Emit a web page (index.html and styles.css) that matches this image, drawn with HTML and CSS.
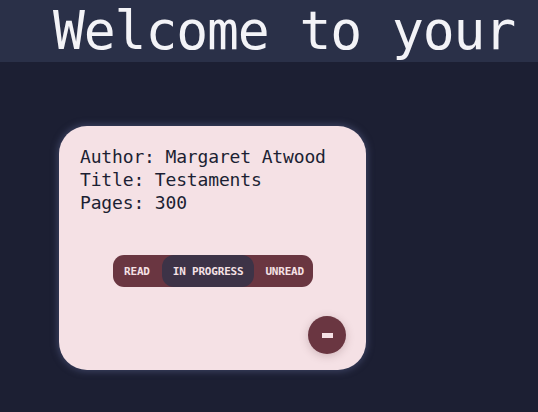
FILE: index.html
```html
<!DOCTYPE html>
<html lang="en">
<head>
<meta charset="utf-8">
<title>Library</title>
<link rel="stylesheet" href="styles.css">
</head>
<body>
<header class="top-bar">
  <h1 class="title">Welcome to your</h1>
</header>
<main class="shelf">
  <article class="book-card">
    <div class="book-info">
      <p>Author: Margaret Atwood</p>
      <p>Title: Testaments</p>
      <p>Pages: 300</p>
    </div>
    <div class="status-toggle">
      <span class="status status-read">READ</span>
      <span class="status active">IN PROGRESS</span>
      <span class="status status-unread">UNREAD</span>
    </div>
    <button class="remove-btn" aria-label="Remove book"><span class="minus"></span></button>
  </article>
</main>
</body>
</html>
```

FILE: styles.css
```css
html, body {
  margin: 0;
  padding: 0;
}
body {
  background: #1c1f33;
  font-family: "DejaVu Sans Mono", "Liberation Mono", monospace;
  width: 538px;
  height: 412px;
  overflow: hidden;
}
.top-bar {
  box-sizing: border-box;
  height: 62px;
  background: #2a3048;
  padding-left: 53px;
  white-space: nowrap;
}
.title {
  margin: 0;
  font-weight: normal;
  font-size: 53px;
  letter-spacing: -1.1px;
  line-height: normal;
  color: #f3f3f7;
}
.shelf {
  padding: 64px 0 0 59px;
}
.book-card {
  box-sizing: border-box;
  width: 307px;
  height: 244px;
  background: #f5e1e5;
  border-radius: 28px;
  box-shadow: 0 0 6px 2px rgba(80, 88, 125, 0.55);
  padding: 19px 20px 16px 21px;
  display: flex;
  flex-direction: column;
}
.book-info p {
  margin: 0;
  font-size: 18px;
  line-height: 23px;
  letter-spacing: -0.15px;
  color: #1c1f33;
}
.status-toggle {
  align-self: center;
  margin-top: 41px;
  height: 32px;
  display: flex;
  background: #6a3641;
  border-radius: 11px;
}
.status {
  display: flex;
  align-items: center;
  padding: 0 11px;
  font-size: 11px;
  font-weight: bold;
  letter-spacing: -0.2px;
  color: #f5e1e5;
  border-radius: 12px;
}
.status-read {
  padding: 0 12px 0 11px;
}
.status-unread {
  padding: 0 9px 0 11px;
}
.status.active {
  background: #3d3347;
}
.remove-btn {
  margin-top: auto;
  align-self: flex-end;
  width: 38px;
  height: 38px;
  border: none;
  border-radius: 50%;
  background: #6a3641;
  box-shadow: 0 2px 8px rgba(90, 50, 60, 0.25);
  display: flex;
  align-items: center;
  justify-content: center;
  padding: 0;
}
.minus {
  width: 11px;
  height: 5px;
  background: #f5e1e5;
}
```
